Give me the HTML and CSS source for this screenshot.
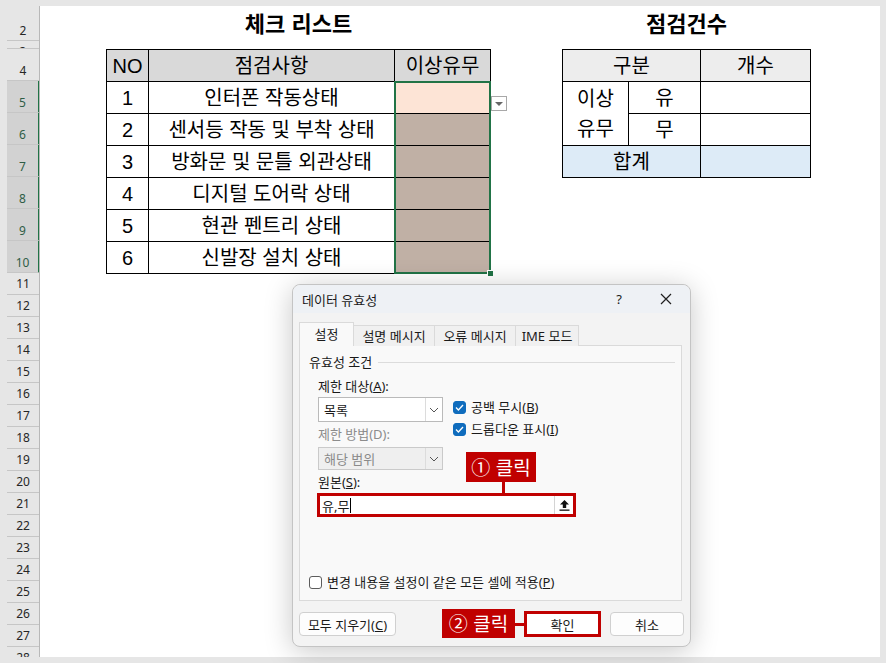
FILE: index.html
```html
<!DOCTYPE html>
<html lang="ko">
<head>
    <meta charset="UTF-8">
    <meta name="viewport" content="width=device-width, initial-scale=1.0">
    <title>데이터 유효성 | 체크 리스트</title>
    <link rel="stylesheet" href="styles.css">
</head>
<body>
    <div class="screen">
        <div class="rowhead">
            <div class="rh h35">2</div>
            <div class="rh h8">3</div>
            <div class="rh h32">4</div>
            <div class="rh h32 sel">5</div>
            <div class="rh h32 sel">6</div>
            <div class="rh h32 sel">7</div>
            <div class="rh h32 sel">8</div>
            <div class="rh h32 sel">9</div>
            <div class="rh h32 sel">10</div>
            <div class="rh h22">11</div>
            <div class="rh h22">12</div>
            <div class="rh h22">13</div>
            <div class="rh h22">14</div>
            <div class="rh h22">15</div>
            <div class="rh h22">16</div>
            <div class="rh h22">17</div>
            <div class="rh h22">18</div>
            <div class="rh h22">19</div>
            <div class="rh h22">20</div>
            <div class="rh h22">21</div>
            <div class="rh h22">22</div>
            <div class="rh h22">23</div>
            <div class="rh h22">24</div>
            <div class="rh h22">25</div>
            <div class="rh h22">26</div>
            <div class="rh h22">27</div>
            <div class="rh h22">28</div>
        </div>

        <div class="canvas">
            <div class="block block-left">
                <div class="sheet-title">체크 리스트</div>
                <div class="table-wrap">
                    <table class="grid check">
                        <colgroup>
                            <col style="width:42px">
                            <col style="width:246px">
                            <col style="width:96px">
                        </colgroup>
                        <tr class="head">
                            <td>NO</td><td>점검사항</td><td>이상유무</td>
                        </tr>
                        <tr><td>1</td><td>인터폰 작동상태</td><td class="c-peach"></td></tr>
                        <tr><td>2</td><td>센서등 작동 및 부착 상태</td><td class="c-brown"></td></tr>
                        <tr><td>3</td><td>방화문 및 문틀 외관상태</td><td class="c-brown"></td></tr>
                        <tr><td>4</td><td>디지털 도어락 상태</td><td class="c-brown"></td></tr>
                        <tr><td>5</td><td>현관 펜트리 상태</td><td class="c-brown"></td></tr>
                        <tr><td>6</td><td>신발장 설치 상태</td><td class="c-brown"></td></tr>
                    </table>
                    <div class="selection"><span class="fill-handle"></span></div>
                    <div class="cell-drop"><span class="tri"></span></div>
                </div>
            </div>

            <div class="block block-right">
                <div class="sheet-title">점검건수</div>
                <table class="grid count">
                    <colgroup>
                        <col style="width:66px">
                        <col style="width:72px">
                        <col style="width:110px">
                    </colgroup>
                    <tr class="head-light">
                        <td colspan="2">구분</td><td>개수</td>
                    </tr>
                    <tr><td rowspan="2" class="two-line">이상<br>유무</td><td>유</td><td></td></tr>
                    <tr><td>무</td><td></td></tr>
                    <tr class="total"><td colspan="2">합계</td><td></td></tr>
                </table>
            </div>

            <div class="dialog">
                <div class="titlebar">
                    <span class="dlg-title">데이터 유효성</span>
                    <span class="help">?</span>
                    <svg class="close" width="12" height="12" viewBox="0 0 12 12">
                        <path d="M1 1L11 11M11 1L1 11" stroke="#1f1f1f" stroke-width="1.2" fill="none"/>
                    </svg>
                </div>

                <div class="dlg-body">
                    <div class="tabs">
                        <div class="tab active">설정</div>
                        <div class="tab w81">설명 메시지</div>
                        <div class="tab w82">오류 메시지</div>
                        <div class="tab w63">IME 모드</div>
                    </div>
                    <div class="panel">
                        <div class="group-head">
                            <span>유효성 조건</span>
                            <span class="group-line"></span>
                        </div>

                        <div class="fields">
                            <div class="lbl">제한 대상(<u>A</u>):</div>
                            <div></div>
                            <div class="select">
                                <span>목록</span>
                                <span class="chev">
                                    <svg width="10" height="6" viewBox="0 0 10 6"><path d="M1 1L5 5L9 1" stroke="#555" stroke-width="1" fill="none"/></svg>
                                </span>
                            </div>
                            <div class="checks">
                                <label class="check-row">
                                    <span class="cb on">
                                        <svg width="9" height="7" viewBox="0 0 9 7"><path d="M1 3.5L3.4 6L8 1" stroke="#fff" stroke-width="1.3" fill="none"/></svg>
                                    </span>
                                    <span>공백 무시(<u>B</u>)</span>
                                </label>
                                <label class="check-row">
                                    <span class="cb on">
                                        <svg width="9" height="7" viewBox="0 0 9 7"><path d="M1 3.5L3.4 6L8 1" stroke="#fff" stroke-width="1.3" fill="none"/></svg>
                                    </span>
                                    <span>드롭다운 표시(<u>I</u>)</span>
                                </label>
                            </div>
                            <div class="lbl dim">제한 방법(D):</div>
                            <div class="select disabled">
                                <span>해당 범위</span>
                                <span class="chev">
                                    <svg width="10" height="6" viewBox="0 0 10 6"><path d="M1 1L5 5L9 1" stroke="#555" stroke-width="1" fill="none"/></svg>
                                </span>
                            </div>
                        </div>

                        <div class="lbl source-lbl">원본(<u>S</u>):</div>
                        <div class="source">
                            <span class="source-val">유,무<span class="caret"></span></span>
                            <span class="pick">
                                <svg width="11" height="12" viewBox="0 0 11 12"><path d="M5.5 1L1 5.5H3.8V9H7.2V5.5H10Z" fill="#111"/><rect x="0.5" y="10.5" width="10" height="1.3" fill="#111"/></svg>
                            </span>
                        </div>

                        <label class="check-row apply">
                            <span class="cb"></span>
                            <span>변경 내용을 설정이 같은 모든 셀에 적용(<u>P</u>)</span>
                        </label>
                    </div>
                </div>

                <div class="dlg-buttons">
                    <button type="button" class="btn btn-clear">모두 지우기(<u>C</u>)</button>
                    <div class="btn-right">
                        <button type="button" class="btn btn-ok">확인</button>
                        <button type="button" class="btn btn-cancel">취소</button>
                    </div>
                </div>

                <div class="callout callout-1">① 클릭</div>
                <div class="link link-1"></div>
                <div class="callout callout-2">② 클릭</div>
                <div class="link link-2"></div>
            </div>
        </div>
    </div>
</body>
</html>
```

FILE: styles.css
```css
* {
    margin: 0;
    padding: 0;
    box-sizing: border-box;
}

body {
    background: #e6e6e6;
    width: 886px;
    height: 663px;
    overflow: hidden;
    font-family: 'Noto Sans', 'Noto Sans CJK KR', sans-serif;
}

.screen {
    display: flex;
    margin: 6px 6px 0 7px;
    height: 651px;
}

/* row headers */
.rowhead {
    width: 33px;
    border-right: 1px solid #b8b8b8;
    overflow: hidden;
}

.rh {
    display: flex;
    align-items: flex-end;
    justify-content: center;
    border-bottom: 1px solid #c6c6c6;
    font-size: 12px;
    line-height: 15px;
    color: #262626;
    padding-bottom: 2px;
    overflow: hidden;
}

.h35 { height: 35px; }
.h8 {
    height: 8px;
    padding-bottom: 0;
    align-items: flex-start;
    line-height: 15px;
    padding-top: 3px;
}
.h32 { height: 32px; }
.h22 { height: 22px; align-items: center; padding-bottom: 0; }

.rh.sel {
    background: #d2d2d2;
    color: #2f5d46;
    border-right: 2px solid #217346;
    margin-right: -1px;
}

/* sheet */
.canvas {
    flex: 1;
    background: #fff;
    position: relative;
    display: flex;
    gap: 71px;
    padding-left: 66px;
}

.sheet-title {
    height: 43px;
    padding-top: 3px;
    text-align: center;
    font-family: 'Noto Sans CJK KR', sans-serif;
    font-size: 22px;
    font-weight: bold;
    line-height: 26px;
    color: #000;
}

.table-wrap {
    position: relative;
}

.grid {
    border-collapse: collapse;
    table-layout: fixed;
    font-family: 'Liberation Sans', 'Noto Sans CJK KR', sans-serif;
    font-size: 20px;
    color: #000;
}

.grid td {
    border: 1px solid #000;
    height: 32px;
    text-align: center;
    padding: 0;
    line-height: 22px;
}

.check { width: 384px; }
.count { width: 248px; }

.head td { background: #d9d9d9; }
.head-light td { background: #ededed; }
.total td { background: #ddebf7; }

.two-line { line-height: 30px !important; }

.c-peach { background: #fde4d6; }
.c-brown { background: #c0b0a5; }

.selection {
    position: absolute;
    left: 288px;
    top: 32px;
    width: 97px;
    height: 193px;
    border: 2px solid #217346;
}

.fill-handle {
    position: absolute;
    right: -5px;
    bottom: -5px;
    width: 7px;
    height: 7px;
    background: #217346;
    border: 1px solid #fff;
}

.cell-drop {
    position: absolute;
    left: 385px;
    top: 47px;
    width: 16px;
    height: 15px;
    background: #fff;
    border: 1px solid #a8a8a8;
    display: flex;
    align-items: center;
    justify-content: center;
}

.tri {
    width: 0;
    height: 0;
    border-left: 4px solid transparent;
    border-right: 4px solid transparent;
    border-top: 4px solid #666;
}

/* dialog */
.dialog {
    position: absolute;
    left: 252px;
    top: 278px;
    width: 399px;
    height: 363px;
    background: #f3f3f3;
    border: 1px solid #c4c4c4;
    border-radius: 8px;
    box-shadow: 0 4px 28px rgba(0, 0, 0, 0.22);
    font-size: 13px;
    color: #1a1a1a;
}

.titlebar {
    height: 28px;
    background: #eef1f5;
    border-radius: 8px 8px 0 0;
    display: flex;
    align-items: center;
    padding-left: 9px;
}

.dlg-title {
    flex: 1;
    font-size: 13px;
}

.help {
    font-size: 13px;
    margin-right: 38px;
}

.close {
    margin-right: 18px;
}

.dlg-body {
    padding: 9px 8px 0 6px;
}

.tabs {
    display: flex;
    align-items: flex-end;
    height: 24px;
    margin-bottom: -1px;
    position: relative;
}

.tab {
    height: 21px;
    background: #f0f0f0;
    border: 1px solid #dadada;
    border-bottom: none;
    text-align: center;
    font-size: 13px;
    line-height: 20px;
    margin-left: -1px;
}

.tab.active {
    width: 55px;
    height: 24px;
    background: #f9f9f9;
    margin-left: 0;
    line-height: 22px;
}

.w81 { width: 82px; }
.w82 { width: 82px; }
.w63 { width: 64px; }

.panel {
    height: 256px;
    background: #f9f9f9;
    border: 1px solid #dadada;
    display: flex;
    flex-direction: column;
    padding: 8px 6px 10px 9px;
}

.group-head {
    display: flex;
    align-items: center;
    gap: 6px;
    line-height: 16px;
    font-size: 13px;
}

.group-line {
    flex: 1;
    height: 1px;
    background: #dcdcdc;
}

.fields {
    display: grid;
    grid-template-columns: 125px auto;
    grid-template-rows: 22px 25px 25px 23px;
    column-gap: 10px;
    margin: 5px 0 0 9px;
}

.lbl {
    font-size: 13px;
    line-height: 22px;
}

.dim { color: #8c8c8c; }

.select {
    display: flex;
    align-items: center;
    background: #fff;
    border: 1px solid #bababa;
    height: 25px;
}

.select span:first-child {
    flex: 1;
    padding-left: 5px;
    font-size: 13px;
}

.chev {
    width: 17px;
    height: 100%;
    border-left: 1px solid #dcdcdc;
    display: flex;
    align-items: center;
    justify-content: center;
}

.select.disabled {
    background: #efefef;
    border-color: #cacaca;
    color: #8a8a8a;
    height: 23px;
}

.fields > .lbl.dim {
    line-height: 25px;
}

.checks {
    grid-row: 2 / 4;
    grid-column: 2;
    display: flex;
    flex-direction: column;
    gap: 6px;
    padding-top: 2px;
}

.check-row {
    display: flex;
    align-items: center;
    gap: 5px;
    font-size: 13px;
    line-height: 16px;
}

.cb {
    width: 13px;
    height: 13px;
    border-radius: 3px;
    border: 1px solid #5c5c5c;
    background: #fff;
    display: flex;
    align-items: center;
    justify-content: center;
}

.cb.on {
    background: #0f6cbd;
    border-color: #0f6cbd;
}

.source-lbl {
    margin: 3px 0 0 9px;
    line-height: 18px;
}

.source {
    margin: 2px 0 0 8px;
    width: 259px;
    height: 24px;
    border: 3px solid #c00000;
    background: #fff;
    display: flex;
    align-items: center;
}

.source-val {
    flex: 1;
    padding-left: 2px;
    font-size: 13px;
    display: flex;
    align-items: center;
}

.caret {
    width: 1px;
    height: 15px;
    background: #000;
    margin-left: 1px;
}

.pick {
    width: 19px;
    height: 100%;
    border-left: 1px solid #d4d4d4;
    display: flex;
    align-items: center;
    justify-content: center;
}

.apply {
    margin-top: auto;
}

.dlg-buttons {
    display: flex;
    align-items: center;
    padding: 0 6px;
    margin-top: 10px;
    height: 26px;
}

.btn {
    height: 24px;
    background: #fdfdfd;
    border: 1px solid #d0d0d0;
    border-radius: 4px;
    font-family: 'Noto Sans', 'Noto Sans CJK KR', sans-serif;
    font-size: 13px;
    color: #1a1a1a;
}

.btn-clear { width: 97px; }

.btn-right {
    margin-left: auto;
    display: flex;
    align-items: center;
    gap: 9px;
}

.btn-ok {
    width: 77px;
    height: 26px;
    border: 3px solid #c00000;
    border-radius: 0;
    background: #fff;
}

.btn-cancel { width: 74px; }

/* annotations */
.callout {
    position: absolute;
    background: #c00000;
    color: #fff;
    font-family: 'Noto Sans CJK KR', sans-serif;
    font-size: 19px;
    text-align: center;
}

.callout-1 {
    left: 173px;
    top: 167px;
    width: 70px;
    height: 30px;
    line-height: 29px;
}

.callout-2 {
    left: 149px;
    top: 324px;
    width: 73px;
    height: 29px;
    line-height: 28px;
}

.link {
    position: absolute;
    background: #c00000;
}

.link-1 {
    left: 209px;
    top: 197px;
    width: 3px;
    height: 13px;
}

.link-2 {
    left: 222px;
    top: 338px;
    width: 10px;
    height: 3px;
}
```
